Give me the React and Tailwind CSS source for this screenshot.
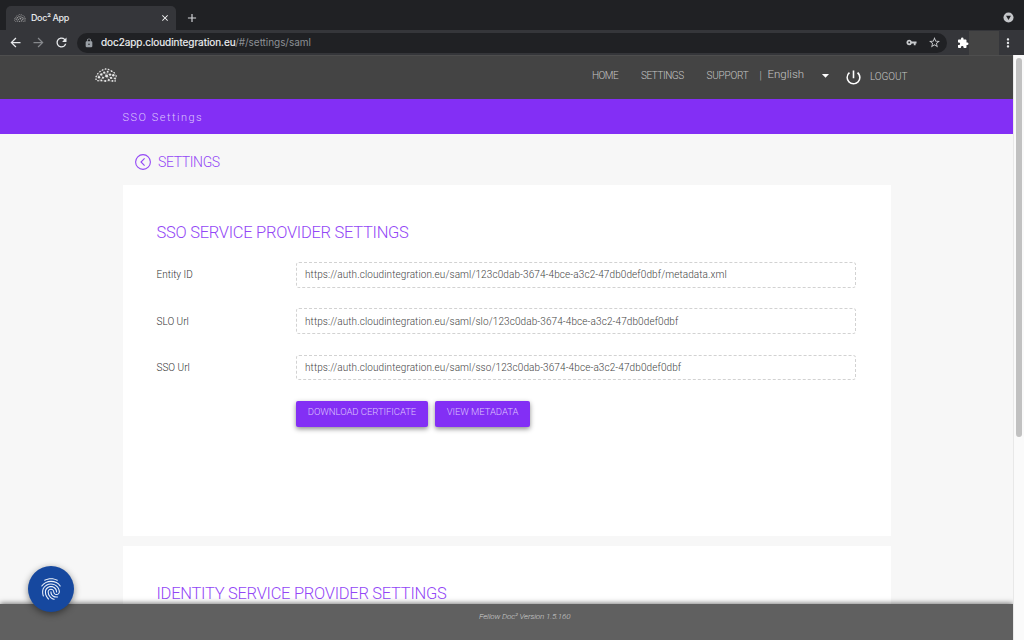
import React from 'react';
import {
  MdFingerprint, MdArrowBack, MdArrowForward, MdRefresh, MdLock, MdVpnKey,
  MdStarBorder, MdExtension, MdMoreVert, MdClose, MdAdd, MdArrowDropDown, MdPowerSettingsNew,
} from 'react-icons/md';

const DOTS = [
  [1, 11.2, 0.9], [1.2, 8.4, 0.9], [3, 12.8, 0.9], [2.8, 5.8, 0.9], [4, 9.2, 1.4], [5, 3.6, 0.9], [6.3, 6.4, 1.4],
  [6.4, 12.4, 1.1], [7.6, 2, 0.9], [8, 9.8, 1.2], [9.2, 4.6, 1.3], [10.6, 0.9, 0.9], [10.2, 12.9, 1.2],
  [11.6, 8, 1.7], [12.7, 3.8, 1.2], [13.6, 1.4, 0.9], [13.8, 12, 1.3], [15, 6.6, 1.4], [16, 9.9, 1.3],
  [16.6, 3.2, 1], [17.4, 12.9, 1], [18.3, 7.3, 1.4], [19.2, 4.8, 0.9], [20, 10.4, 1.1], [20.2, 13, 0.9],
  [21.2, 8, 0.9],
];

function CloudLogo({ className }) {
  return (
    <svg viewBox="0 0 22 14" className={className} preserveAspectRatio="none">
      <path
        d="M1 11.2 1.2 8.4 2.8 5.8 5 3.6 7.6 2 10.6.9 13.6 1.4 16.6 3.2 19.2 4.8 21.2 8 20.2 13 10.2 12.9 3 12.8 1 11.2M1.2 8.4 6.3 6.4 9.2 4.6 15 6.6 18.3 7.3M3 12.8 8 9.8 11.6 8 16 9.9 20 10.4M6.3 6.4 8 9.8M9.2 4.6 11.6 8 13.8 12"
        fill="none" stroke="#a8a8a8" strokeWidth="0.5"
      />
      {DOTS.map(([x, y, r]) => (
        <circle key={`${x}-${y}`} cx={x} cy={y} r={r * 0.85} fill="#e8e8e8" />
      ))}
    </svg>
  );
}

function Browser() {
  return (
    <div className="font-['Inter',sans-serif]">
      <div className="flex h-[30px] items-end justify-between bg-[#202124]">
        <div className="flex h-6 items-center">
          <div className="ml-1.5 flex h-6 w-[170px] items-center rounded-t-[5px] bg-[#35363a] pl-2 pr-[6px]">
            <CloudLogo className="h-[8px] w-[12px] opacity-60" />
            <span className="ml-[5px] flex-1 text-[9px] font-medium tracking-[-0.4px] text-[#e8eaed]">Doc² App</span>
            <MdClose className="size-[10px] text-white" />
          </div>
          <MdAdd className="ml-[9px] size-[14px] text-[#d5d7da]" />
        </div>
        <svg viewBox="0 0 12 12" className="mb-[7px] mr-[10px] size-[11px]">
          <circle cx="6" cy="6" r="5.5" fill="#c5c7ca" />
          <path d="M3.3 4.2h5.4L6 8.7z" fill="#202124" />
        </svg>
      </div>
      <div className="flex h-[25px] items-center bg-[#35363a]">
        <MdArrowBack className="ml-[8px] size-[15px] text-[#e8eaed]" />
        <MdArrowForward className="ml-[8px] size-[15px] text-[#86888c]" />
        <MdRefresh className="ml-[8px] size-[15px] text-[#e8eaed]" />
        <div className="ml-[8px] flex h-5 w-[870px] items-center rounded-full bg-[#202124] pl-[7px] pr-[6px]">
          <MdLock className="size-[10px] text-[#9aa0a6]" />
          <div className="ml-[7px] flex-1 text-[10px] tracking-[-0.05px] text-[#8c9095]">
            <span className="text-[#f1f3f4] [-webkit-text-stroke:0.15px_#f1f3f4]">doc2app.cloudintegration.eu</span>
            <span>/#/settings/saml</span>
          </div>
          <MdVpnKey className="size-[11px] text-[#c8cacd]" />
          <MdStarBorder className="ml-[11px] size-[13px] text-[#c8cacd]" />
        </div>
        <MdExtension className="ml-[10px] size-[12px] text-white" />
        <div className="h-[24px] w-[30px] bg-[#444444]" />
        <MdMoreVert className="ml-[2px] size-[14px] text-[#e8eaed]" />
      </div>
    </div>
  );
}

function TopNav() {
  return (
    <div className="flex h-[44px] shrink-0 items-start border-t border-[#4e4e4e] bg-[#444444] text-[10px] leading-[14px] text-[#c4c4c4]">
      <CloudLogo className="ml-[95px] mt-[12px] h-[14px] w-[22px]" />
      <span className="ml-[475px] mt-[13px] w-[49px] tracking-[-0.5px]">HOME</span>
      <span className="mt-[13px] w-[65.5px] tracking-[-0.45px]">SETTINGS</span>
      <span className="mt-[13px] w-[53px] tracking-[-0.2px]">SUPPORT</span>
      <span className="mt-[13px] w-[8px]">|</span>
      <span className="mt-[11px] w-[49.5px] text-[11.5px]">English</span>
      <MdArrowDropDown className="mt-[11px] size-[17px] text-white" />
      <MdPowerSettingsNew className="ml-[10px] mt-[12px] size-[19px] text-white" />
      <span className="ml-[7px] mt-[14px] tracking-[-0.1px]">LOGOUT</span>
    </div>
  );
}

function Field({ label, value }) {
  return (
    <div className="flex h-[25.5px] items-center text-[10px]">
      <span className="w-[139.5px] text-[#333]">{label}</span>
      <div className="flex h-full w-[560px] items-center rounded-[3px] border border-dashed border-[#d2d2d2] pl-2 tracking-[0.095px] text-[#444]">
        {value}
      </div>
    </div>
  );
}

function Button({ className, children }) {
  return (
    <button className={`h-[26px] rounded-[2px] bg-[#832ff5] pb-[3px] text-[9.5px] text-[#dcc4fc] shadow-[0_2px_5px_rgba(0,0,0,0.45)] ${className}`}>
      {children}
    </button>
  );
}

export default function App() {
  return (
    <div className="flex h-[640px] w-[1024px] flex-col overflow-hidden">
      <Browser />
      <div className="flex min-h-0 flex-1">
        <div className="relative flex w-[1013px] flex-col overflow-hidden bg-[#f7f7f7] font-['Roboto',sans-serif] font-light">
          <TopNav />
          <div className="h-[35px] shrink-0 bg-[#832ff5] pl-[122.5px] text-[11px] leading-[37px] tracking-[1.5px] text-[#ddc6fc]">
            SSO Settings
          </div>
          <div className="flex h-[51px] shrink-0 items-center pl-[135px] pt-[4px] text-[14px] text-[#9347f6]">
            <svg viewBox="0 0 16 16" className="size-4" fill="none" stroke="currentColor" strokeWidth="1.1">
              <circle cx="8" cy="8" r="7.4" />
              <path d="M9.6 4.4 6 8l3.6 3.6" />
            </svg>
            <span className="ml-[7px] pt-px tracking-[-0.38px]">SETTINGS</span>
          </div>
          <section className="ml-[123px] h-[350.5px] w-[768px] shrink-0 bg-white pl-[33.5px] pt-[36px]">
            <h2 className="text-[16.5px] leading-6 tracking-[-0.28px] text-[#9347f6]">SSO SERVICE PROVIDER SETTINGS</h2>
            <div className="mt-[17px] flex flex-col gap-[20.8px]">
              <Field label="Entity ID" value="https://auth.cloudintegration.eu/saml/123c0dab-3674-4bce-a3c2-47db0def0dbf/metadata.xml" />
              <Field label="SLO Url" value="https://auth.cloudintegration.eu/saml/slo/123c0dab-3674-4bce-a3c2-47db0def0dbf" />
              <Field label="SSO Url" value="https://auth.cloudintegration.eu/saml/sso/123c0dab-3674-4bce-a3c2-47db0def0dbf" />
            </div>
            <div className="ml-[139.5px] mt-[21px] flex gap-[7px]">
              <Button className="w-[132px] tracking-[-0.05px]">DOWNLOAD CERTIFICATE</Button>
              <Button className="w-[95px] tracking-[-0.05px]">VIEW METADATA</Button>
            </div>
          </section>
          <section className="ml-[123px] mt-[10.5px] h-[150px] w-[768px] shrink-0 bg-white pl-[33.5px] pt-[36px]">
            <h2 className="text-[16.5px] leading-6 tracking-[-0.28px] text-[#9347f6]">IDENTITY SERVICE PROVIDER SETTINGS</h2>
          </section>
          <footer className="absolute inset-x-0 bottom-0 h-[36px] bg-[#606060] pl-[479px] pt-[6px] text-[8px] italic leading-[13px] tracking-[-0.13px] text-[#d0d0d0] shadow-[0_-1px_5px_rgba(0,0,0,0.5)]">
            Fellow Doc² Version 1.5.160
          </footer>
          <button className="absolute bottom-[28px] left-[28px] flex size-[46px] items-center justify-center rounded-full bg-[#16489f] shadow-[0_2px_7px_rgba(0,0,0,0.45)]">
            <MdFingerprint className="size-[26px] text-[#eef3fc]" />
          </button>
        </div>
        <div className="flex flex-1 justify-center border-l border-[#e8e8e8] bg-[#fafafa] pt-[3px]">
          <div className="h-[379px] w-[6px] rounded-full bg-[#c1c1c1]" />
        </div>
      </div>
    </div>
  );
}
